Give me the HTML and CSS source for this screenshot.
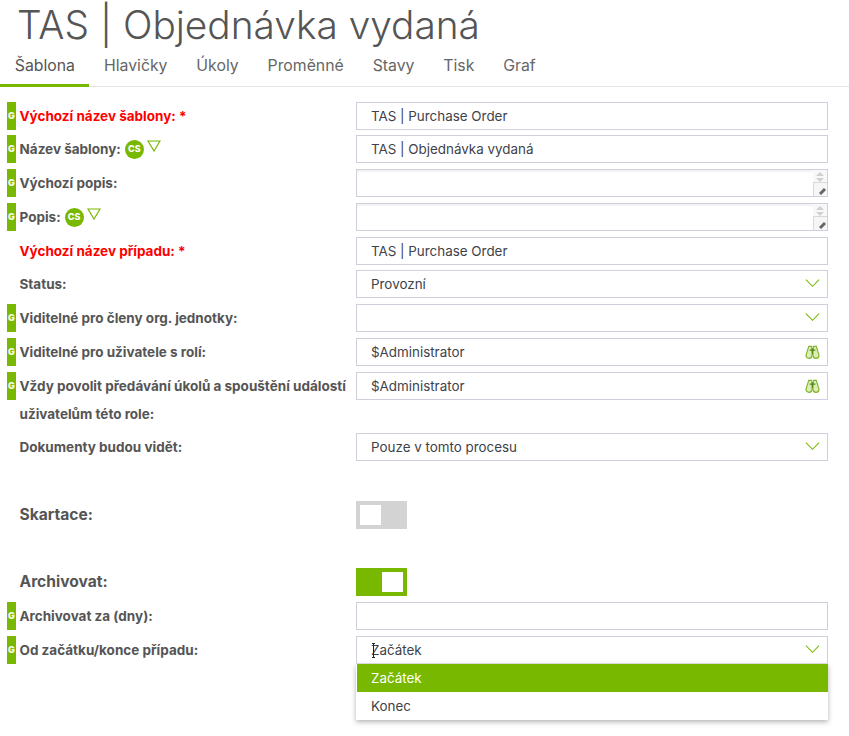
FILE: index.html
```html
<!DOCTYPE html>
<html lang="cs">
<head>
  <meta charset="UTF-8">
  <title>TAS | Objednávka vydaná</title>
  <link rel="stylesheet" href="styles.css">
</head>
<body>
  <h1 class="page-title">TAS | Objednávka vydaná</h1>

  <nav class="tabs">
    <a class="tab active">Šablona</a>
    <a class="tab">Hlavičky</a>
    <a class="tab">Úkoly</a>
    <a class="tab">Proměnné</a>
    <a class="tab">Stavy</a>
    <a class="tab">Tisk</a>
    <a class="tab">Graf</a>
  </nav>

  <svg width="0" height="0" class="defs">
    <symbol id="chevron" viewBox="0 0 16 10"><path d="M1 1.5 8 8.5 15 1.5" fill="none" stroke="#78b800" stroke-width="1.1"/></symbol>
    <symbol id="lang-arrow" viewBox="0 0 14 12"><path d="M1 1H13L7 11Z" fill="none" stroke="#78b800" stroke-width="1.2"/></symbol>
    <symbol id="binoculars" viewBox="0 0 16 14">
      <path d="M4 1H7L7.5 8V10.5A3.2 3.2 0 0 1 1 10.5Z" fill="#dcedb8" stroke="#7fb52a" stroke-width="1.2"/>
      <path d="M12 1H9L8.5 8V10.5A3.2 3.2 0 0 0 15 10.5Z" fill="#dcedb8" stroke="#7fb52a" stroke-width="1.2"/>
      <path d="M5 5H11M8 3V9" stroke="#4f8a10" stroke-width="1.1"/>
    </symbol>
  </svg>

  <form class="form">
    <div class="row">
      <div class="label-cell"><span class="g-badge">G</span><label class="required">Výchozí název šablony: *</label></div>
      <div class="field"><div class="input">TAS | Purchase Order</div></div>
    </div>
    <div class="row">
      <div class="label-cell"><span class="g-badge">G</span><label>Název šablony:</label><span class="lang">CS</span><svg class="lang-arrow"><use href="#lang-arrow"/></svg></div>
      <div class="field"><div class="input">TAS | Objednávka vydaná</div></div>
    </div>
    <div class="row">
      <div class="label-cell"><span class="g-badge">G</span><label>Výchozí popis:</label></div>
      <div class="field"><div class="input area"><span class="spin"><b class="up"></b><b class="down"></b></span><span class="grip"></span></div></div>
    </div>
    <div class="row">
      <div class="label-cell"><span class="g-badge">G</span><label>Popis:</label><span class="lang">CS</span><svg class="lang-arrow"><use href="#lang-arrow"/></svg></div>
      <div class="field"><div class="input area"><span class="spin"><b class="up"></b><b class="down"></b></span><span class="grip"></span></div></div>
    </div>
    <div class="row">
      <div class="label-cell"><label class="required">Výchozí název případu: *</label></div>
      <div class="field"><div class="input">TAS | Purchase Order</div></div>
    </div>
    <div class="row">
      <div class="label-cell"><label>Status:</label></div>
      <div class="field"><div class="input">Provozní<svg class="chevron"><use href="#chevron"/></svg></div></div>
    </div>
    <div class="row">
      <div class="label-cell"><span class="g-badge">G</span><label>Viditelné pro členy org. jednotky:</label></div>
      <div class="field"><div class="input"><svg class="chevron"><use href="#chevron"/></svg></div></div>
    </div>
    <div class="row">
      <div class="label-cell"><span class="g-badge">G</span><label>Viditelné pro uživatele s rolí:</label></div>
      <div class="field"><div class="input">$Administrator<svg class="binoculars"><use href="#binoculars"/></svg></div></div>
    </div>
    <div class="row row-tall">
      <div class="label-cell"><span class="g-badge">G</span><label>Vždy povolit předávání úkolů a spouštění událostí uživatelům této role:</label></div>
      <div class="field"><div class="input">$Administrator<svg class="binoculars"><use href="#binoculars"/></svg></div></div>
    </div>
    <div class="row">
      <div class="label-cell"><label>Dokumenty budou vidět:</label></div>
      <div class="field"><div class="input">Pouze v tomto procesu<svg class="chevron"><use href="#chevron"/></svg></div></div>
    </div>

    <div class="row section">
      <div class="label-cell"><label class="big">Skartace:</label></div>
      <div class="field"><span class="toggle"><i></i></span></div>
    </div>
    <div class="row section section-on">
      <div class="label-cell"><label class="big">Archivovat:</label></div>
      <div class="field"><span class="toggle on"><i></i></span></div>
    </div>
    <div class="row">
      <div class="label-cell"><span class="g-badge">G</span><label>Archivovat za (dny):</label></div>
      <div class="field"><div class="input"></div></div>
    </div>
    <div class="row">
      <div class="label-cell"><span class="g-badge">G</span><label>Od začátku/konce případu:</label></div>
      <div class="field">
        <div class="input open"><span class="cursor"></span>Začátek<svg class="chevron"><use href="#chevron"/></svg></div>
        <ul class="menu">
          <li class="selected">Začátek</li>
          <li>Konec</li>
        </ul>
      </div>
    </div>
  </form>
</body>
</html>
```

FILE: styles.css
```css
:root {
  --green: #78b800;
  --text: #555;
  --border: #d0d0dc;
}
* { box-sizing: border-box; }
body {
  margin: 0;
  height: 736px;
  overflow: hidden;
  background: #fff;
  color: var(--text);
  font-family: Inter, "Liberation Sans", sans-serif;
  font-size: 13px;
}
.defs { position: absolute; }

.page-title {
  margin: 0;
  padding: 2px 0 0 17px;
  height: 48px;
  font-size: 38.8px;
  line-height: 46px;
  font-weight: 300;
  color: #555;
}

.tabs {
  display: flex;
  height: 39px;
  border-bottom: 1px solid #e4e4e4;
}
.tab {
  padding: 0 14.1px 0 14.8px;
  line-height: 35px;
  font-size: 15.8px;
  font-weight: 400;
  color: #666;
}
.tab.active {
  color: #555;
  height: 39px;
  padding-right: 14.2px;
  border-bottom: 3px solid var(--green);
}

.form { padding: 14.6px 21px 0 7px; }
.row {
  display: grid;
  grid-template-columns: 349px 472px;
  min-height: 28px;
  margin-bottom: 5.75px;
}
.row-tall { min-height: 55.65px; }
.section { margin-top: 40px; }
.section-on { margin-top: 39px; margin-bottom: 6px; }

.label-cell {
  display: flex;
  align-items: flex-start;
  position: relative;
  padding-left: 12.5px;
  gap: 4px;
}
.label-cell label {
  font-weight: 700;
  font-size: 13.5px;
  line-height: 28px;
  color: var(--text);
}
.label-cell label.required { color: #f00; }
.label-cell label.big { font-size: 15.6px; line-height: 28px; }

.g-badge {
  position: absolute;
  left: 0;
  top: 0;
  width: 9px;
  height: 28px;
  background: var(--green);
  color: #f4f8e4;
  font-size: 9px;
  font-weight: 900;
  line-height: 27px;
  text-align: center;
}

.lang {
  width: 19px;
  height: 19px;
  margin-top: 5px;
  border-radius: 50%;
  background: var(--green);
  color: #fff;
  font-size: 9px;
  font-weight: 800;
  line-height: 18px;
  text-align: center;
}
.lang-arrow { width: 14px; height: 12px; margin-top: 5px; margin-left: -1px; }

.field { position: relative; }
.input {
  position: relative;
  height: 28px;
  padding: 0 14px;
  border: 1px solid var(--border);
  background: #fff;
  font-size: 13.4px;
  line-height: 27.6px;
  color: #40424a;
}
.input.area { box-shadow: inset 0 2px 2px #f2f2f2; }
.input.open { border-bottom-color: #e6e6e6; }

.chevron { position: absolute; right: 7px; top: 7px; width: 15px; height: 10px; }
.binoculars { position: absolute; right: 7px; top: 6px; width: 15px; height: 14px; }

.spin {
  position: absolute;
  right: 0;
  top: 0;
  width: 14px;
  height: 13px;
  background: #f8f8f8;
}
.spin b {
  position: absolute;
  left: 3px;
  border-left: 4px solid transparent;
  border-right: 4px solid transparent;
}
.spin .up { top: 2px; border-bottom: 4px solid #d0d0d0; }
.spin .down { top: 8px; border-top: 4px solid #d0d0d0; }
.grip {
  position: absolute;
  right: 0;
  bottom: 0;
  width: 14px;
  height: 14px;
  background: #f6f6f6;
  border-left: 1px solid #d8d8d8;
  border-top: 1px solid #d8d8d8;
}
.grip::after {
  content: "";
  position: absolute;
  right: 1px;
  bottom: 3px;
  width: 7px;
  height: 3px;
  background: #666;
  transform: rotate(-45deg);
}

.toggle {
  display: block;
  position: relative;
  width: 51px;
  height: 28px;
  background: #d3d3d3;
}
.toggle i {
  position: absolute;
  left: 4px;
  top: 4px;
  width: 21px;
  height: 20px;
  background: #fff;
}
.toggle.on { background: var(--green); }
.toggle.on i { left: 26px; }

/* mouse cursor over the open select */
.cursor {
  position: absolute;
  left: 16px;
  top: 6px;
  width: 1px;
  height: 15px;
  background: #222;
}
.cursor::before,
.cursor::after {
  content: "";
  position: absolute;
  left: -1px;
  width: 3px;
  height: 1px;
  background: #222;
}
.cursor::before { top: 0; }
.cursor::after { bottom: 0; }

.menu {
  position: absolute;
  left: 0;
  right: 0;
  top: 28px;
  margin: 0;
  padding: 0 0 0 1px;
  list-style: none;
  background: #fff;
  box-shadow: 0 2px 5px rgba(0, 0, 0, 0.3);
  z-index: 2;
}
.menu li {
  height: 28px;
  padding: 0 14px;
  line-height: 28px;
  font-size: 13.4px;
  color: #40424a;
}
.menu li.selected { background: var(--green); color: #fff; }
```
